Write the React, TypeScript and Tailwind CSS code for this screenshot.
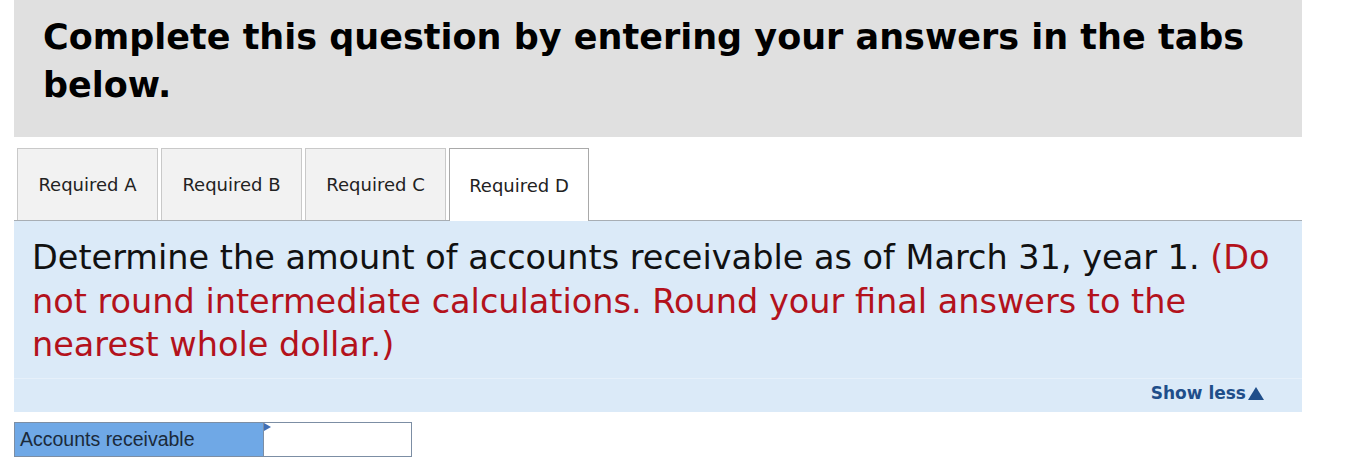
import React from "react";

export default function App() {
  const tabs = ["Required A", "Required B", "Required C", "Required D"];
  return (
    <div className="w-[1347px] h-[470px] bg-white overflow-hidden" style={{ fontFamily: "'DejaVu Sans', Verdana, sans-serif" }}>
      <div className="ml-[14px] w-[1288px]">
        <div className="bg-[#e0e0e0] h-[137px] pt-[13px] pl-[29px] pr-[40px]">
          <h1 className="text-[35px] leading-[48px] font-bold text-black">
            Complete this question by entering your answers in the tabs below.
          </h1>
        </div>
        <div className="mt-[11px] flex items-end h-[72px] pl-[3px] gap-[3px] relative">
          {tabs.map((t, i) => {
            const active = i === 3;
            return (
              <div
                key={t}
                className={
                  active
                    ? "relative z-10 w-[140px] h-[73px] -mb-[1px] bg-white border border-b-0 border-[#a9a9a9] flex items-center justify-center text-[18px] text-[#222]"
                    : "w-[141px] h-[72px] bg-[#f2f2f2] border border-b-0 border-[#c9c9c9] flex items-center justify-center text-[18px] text-[#222]"
                }
              >
                {t}
              </div>
            );
          })}
        </div>
        <div className="bg-[#dbeaf8] border-t border-[#a8aeb4]">
          <div className="pt-[15px] pl-[18px] pr-[20px] pb-[11px] text-[33.5px] leading-[43.5px] text-[#111]">
            Determine the amount of accounts receivable as of March 31, year 1.{" "}
            <span className="text-[#b3121c]">
              (Do not round intermediate calculations. Round your final answers to the nearest whole dollar.)
            </span>
          </div>
          <div className="border-t border-[#e6f0fa] h-[34px] flex items-start pt-[2px] justify-end pr-[38px]">
            <span className="text-[17px] leading-[24px] font-bold text-[#1f4e8a]">Show less</span>
            <svg className="ml-[2px] mt-[6px]" width="16" height="13" viewBox="0 0 16 13">
              <polygon points="8,0 16,13 0,13" fill="#1f4e8a" />
            </svg>
          </div>
        </div>
        <div className="mt-[10px] flex h-[35px] w-[398px] border border-[#7c8ea4]">
          <div
            className="w-[249px] bg-[#6fa8e6] border-r border-[#7c8ea4] flex items-center pl-[5px] pt-[2px] text-[19.5px] text-[#1b2a3a]"
            style={{ fontFamily: "'Liberation Sans', Arial, sans-serif" }}
          >
            Accounts receivable
          </div>
          <div className="relative flex-1 bg-white">
            <svg className="absolute left-0 top-0" width="8" height="10" viewBox="0 0 8 10">
              <polygon points="0,0 7,4 0,8" fill="#3f6fb6" />
            </svg>
          </div>
        </div>
      </div>
    </div>
  );
}
